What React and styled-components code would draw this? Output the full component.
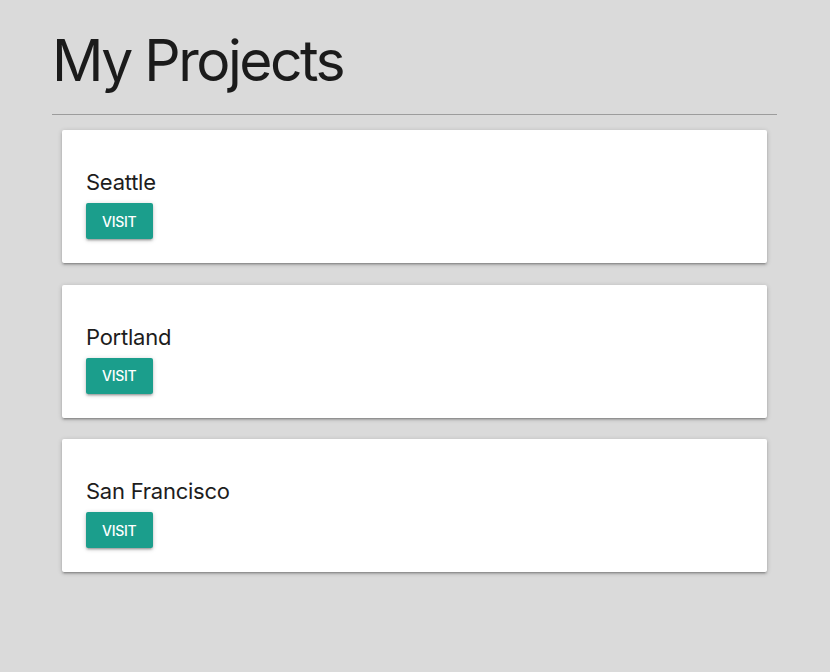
import React from 'react'
import styled, { createGlobalStyle } from 'styled-components'

const GlobalStyle = createGlobalStyle`
  html, body {
    margin: 0;
    padding: 0;
    background: #dadada;
  }
  body {
    font-family: Inter, Roboto, "Liberation Sans", sans-serif;
    color: #1d1d1d;
  }
`;

const Page = styled.div`
  min-height: 672px;
  padding: 0 53px 0 52px;
  box-sizing: border-box;
`;

const Title = styled.h1`
  margin: 0;
  padding-top: 26px;
  font-size: 57px;
  font-weight: 400;
  line-height: 70px;
  letter-spacing: -2.5px;
  color: #1b1b1b;
`;

const Divider = styled.hr`
  margin: 18px 0 15px;
  border: 0;
  border-top: 1px solid #9c9c9c;
`;

const CardList = styled.div`
  display: flex;
  flex-direction: column;
  gap: 21.5px;
  padding: 0 10px;
`;

const Card = styled.div`
  background: #fff;
  border-radius: 2px;
  height: 133px;
  box-sizing: border-box;
  padding: 36px 24px 24px;
  box-shadow: 0 2px 2px 0 rgba(0, 0, 0, 0.14), 0 3px 1px -2px rgba(0, 0, 0, 0.12), 0 1px 5px 0 rgba(0, 0, 0, 0.2);
`;

const CardTitle = styled.div`
  font-size: 22px;
  line-height: 32px;
  margin-bottom: 5px;
  letter-spacing: -0.25px;
  color: #1d1d1d;
`;

const VisitButton = styled.button`
  display: inline-flex;
  align-items: center;
  justify-content: center;
  height: 36px;
  padding: 0 16px;
  border: 0;
  border-radius: 2px;
  background: #1b9e8c;
  color: #fff;
  font-family: inherit;
  font-size: 14px;
  font-weight: 500;
  text-transform: uppercase;
  letter-spacing: -0.25px;
  cursor: pointer;
  box-shadow: 0 2px 2px 0 rgba(0, 0, 0, 0.14), 0 3px 1px -2px rgba(0, 0, 0, 0.12), 0 1px 5px 0 rgba(0, 0, 0, 0.2);
`;

const projects = ['Seattle', 'Portland', 'San Francisco'];

export default function App() {
  return (
    <>
      <GlobalStyle />
      <Page>
        <Title>My Projects</Title>
        <Divider />
        <CardList>
          {projects.map((name) => (
            <Card key={name}>
              <CardTitle>{name}</CardTitle>
              <VisitButton>Visit</VisitButton>
            </Card>
          ))}
        </CardList>
      </Page>
    </>
  )
}
